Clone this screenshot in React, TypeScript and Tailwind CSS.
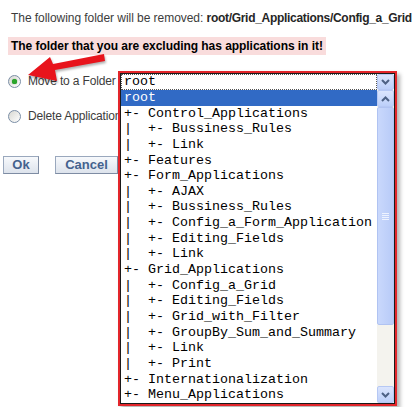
import React from "react";

const items = [
  "root",
  "+- Control_Applications",
  "|  +- Bussiness_Rules",
  "|  +- Link",
  "+- Features",
  "+- Form_Applications",
  "|  +- AJAX",
  "|  +- Bussiness_Rules",
  "|  +- Config_a_Form_Application",
  "|  +- Editing_Fields",
  "|  +- Link",
  "+- Grid_Applications",
  "|  +- Config_a_Grid",
  "|  +- Editing_Fields",
  "|  +- Grid_with_Filter",
  "|  +- GroupBy_Sum_and_Summary",
  "|  +- Link",
  "|  +- Print",
  "+- Internationalization",
  "+- Menu_Applications",
];

function Chevron({ up }: { up?: boolean }) {
  return (
    <svg width="9" height="6" viewBox="0 0 9 6">
      <path
        d={up ? "M1 5 L4.5 1.5 L8 5" : "M1 1 L4.5 4.5 L8 1"}
        fill="none"
        stroke="#4d6185"
        strokeWidth="2"
      />
    </svg>
  );
}

function ScrollBtn({ up }: { up?: boolean }) {
  return (
    <div className="w-[17px] h-[17px] flex items-center justify-center bg-gradient-to-b from-[#dbe5fd] to-[#bccffa] border border-[#b6c8f4] rounded-[2px]">
      <Chevron up={up} />
    </div>
  );
}

function Radio({ checked }: { checked?: boolean }) {
  return (
    <div className="w-[13px] h-[13px] rounded-full border border-[#7b8ea6] bg-gradient-to-br from-[#d8d8d2] to-[#ffffff] flex items-center justify-center">
      {checked && (
        <div className="w-[5px] h-[5px] rounded-full bg-[#2aa62a] shadow-[0_0_1px_#1a7a1a]" />
      )}
    </div>
  );
}

function Btn({ label, w }: { label: string; w: string }) {
  return (
    <div
      className={`${w} h-[18px] flex items-center justify-center border border-[#9aa8bd] border-b-[#7e8ca3] border-r-[#7e8ca3] bg-gradient-to-b from-[#f7f9fc] to-[#dde3ec] text-[13px] font-bold text-[#44628e]`}
    >
      {label}
    </div>
  );
}

export default function App() {
  return (
    <div className="relative w-[418px] h-[407px] overflow-hidden bg-white font-['Liberation_Sans',Arial,sans-serif]">
      <div className="pt-[11px] pl-[11px] text-[12px] leading-[14px] text-[#3c3c3c] whitespace-nowrap tracking-[-0.05px]">
        The following folder will be removed:{" "}
        <span className="font-bold text-[#262626] tracking-[-0.3px]">root/Grid_Applications/Config_a_Grid</span>
      </div>
      <div className="mt-[12px] ml-[8px] inline-block h-[18px] px-[3px] bg-[#f9dcdc] text-[12px] leading-[18px] font-bold text-black whitespace-nowrap tracking-[-0.05px]">
        The folder that you are excluding has applications in it!
      </div>
      <div className="mt-[17px] pl-[8px] flex items-center gap-[7px] h-[14px] text-[12px] text-[#3c3c3c] whitespace-nowrap tracking-[-0.15px]">
        <Radio checked />
        <span>Move to a Folder</span>
      </div>
      <div className="mt-[21px] pl-[8px] flex items-center gap-[7px] h-[14px] text-[12px] text-[#3c3c3c] whitespace-nowrap tracking-[-0.15px]">
        <Radio />
        <span>Delete Applications</span>
      </div>
      <div className="mt-[33px] pl-[3px] flex gap-[16px]">
        <Btn label="Ok" w="w-[36px]" />
        <Btn label="Cancel" w="w-[63px]" />
      </div>

      {/* red annotation arrow */}
      <svg className="absolute left-0 top-0" width="120" height="100" viewBox="0 0 120 100">
        <polygon
          points="104,54 105,61 55,70 57,81 28,75 50,57 53,64"
          fill="#e8141c"
          style={{ filter: "drop-shadow(1px 2px 1px rgba(0,0,0,0.3))" }}
        />
      </svg>

      {/* dropdown */}
      <div className="absolute left-[118px] top-[71px] w-[279px] h-[335px] border-2 border-[#e3262b] shadow-[3px_3px_4px_rgba(0,0,0,0.3)] bg-white">
        <div className="h-full border border-[#1a1a1a] flex flex-col font-['Liberation_Mono','Courier_New',monospace] text-[13.33px]">
          <div className="h-[16px] flex">
            <div className="flex-1 border border-dotted border-[#555] leading-[14px] pl-[2px] text-black">root</div>
            <div className="w-[17px] h-[16px] flex items-center justify-center bg-gradient-to-b from-[#dbe5fd] to-[#bccffa] border border-[#b6c8f4] rounded-[2px]">
              <Chevron />
            </div>
          </div>
          <div className="flex-1 flex">
            <div className="flex-1 flex flex-col">
              {items.map((t, i) => (
                <div
                  key={i}
                  className={`h-[15.65px] leading-[15.65px] pl-[3px] whitespace-pre ${
                    i === 0 ? "bg-[#316ac5] text-white" : "text-black"
                  }`}
                >
                  {t}
                </div>
              ))}
            </div>
            <div className="w-[17px] flex flex-col bg-[#f4f3ee]">
              <ScrollBtn up />
              <div className="h-[218px] bg-gradient-to-r from-[#c9d8fc] to-[#b8cbf8] border border-[#b0c3f2] rounded-[2px] flex items-center justify-center">
                <div className="flex flex-col gap-[1px]">
                  <div className="w-[7px] h-[1px] bg-[#eef3ff]" />
                  <div className="w-[7px] h-[1px] bg-[#eef3ff]" />
                  <div className="w-[7px] h-[1px] bg-[#eef3ff]" />
                  <div className="w-[7px] h-[1px] bg-[#eef3ff]" />
                </div>
              </div>
              <div className="flex-1" />
              <ScrollBtn />
            </div>
          </div>
        </div>
      </div>
    </div>
  );
}
